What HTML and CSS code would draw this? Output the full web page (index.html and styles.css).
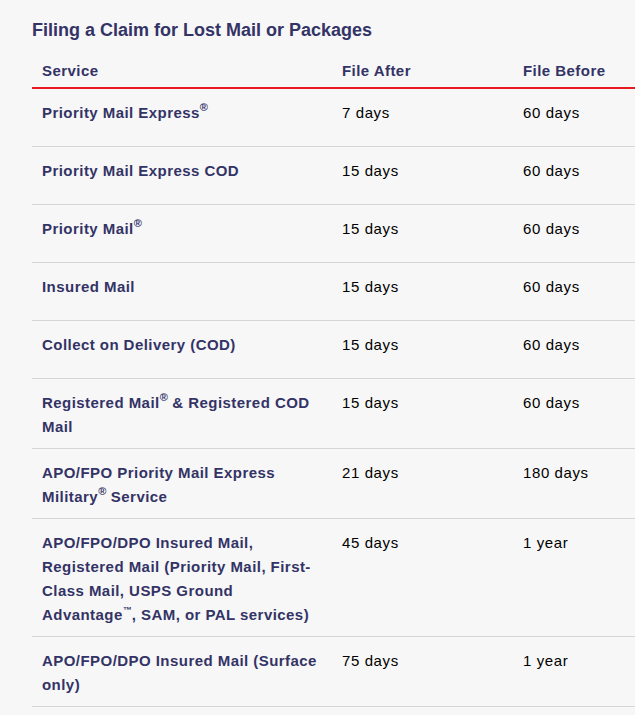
FILE: index.html
```html
<!DOCTYPE html>
<html lang="en">
<head>
<meta charset="utf-8">
<title>Filing a Claim for Lost Mail or Packages</title>
<link rel="stylesheet" href="styles.css">
</head>
<body>
<main class="page">
  <h2 class="title">Filing a Claim for Lost Mail or Packages</h2>
  <table class="claims">
    <colgroup>
      <col class="c-service">
      <col class="c-after">
      <col class="c-before">
    </colgroup>
    <thead>
      <tr>
        <th>Service</th>
        <th>File After</th>
        <th>File Before</th>
      </tr>
    </thead>
    <tbody>
      <tr><td class="svc">Priority Mail Express<sup>®</sup></td><td>7 days</td><td>60 days</td></tr>
      <tr><td class="svc">Priority Mail Express COD</td><td>15 days</td><td>60 days</td></tr>
      <tr><td class="svc">Priority Mail<sup>®</sup></td><td>15 days</td><td>60 days</td></tr>
      <tr><td class="svc">Insured Mail</td><td>15 days</td><td>60 days</td></tr>
      <tr><td class="svc">Collect on Delivery (COD)</td><td>15 days</td><td>60 days</td></tr>
      <tr><td class="svc">Registered Mail<sup>®</sup> &amp; Registered COD Mail</td><td>15 days</td><td>60 days</td></tr>
      <tr><td class="svc">APO/FPO Priority Mail Express Military<sup>®</sup> Service</td><td>21 days</td><td>180 days</td></tr>
      <tr><td class="svc">APO/FPO/DPO Insured Mail, Registered Mail (Priority Mail, First-Class Mail, USPS Ground Advantage<sup class="tm">™</sup>, SAM, or PAL services)</td><td>45 days</td><td>1 year</td></tr>
      <tr><td class="svc">APO/FPO/DPO Insured Mail (Surface only)</td><td>75 days</td><td>1 year</td></tr>
    </tbody>
  </table>
</main>
</body>
</html>
```
FILE: styles.css
```css
html, body {
  margin: 0;
  padding: 0;
  background: #f7f7f7;
}
body {
  font-family: "Liberation Sans", Arial, sans-serif;
  color: #000;
}
.page {
  padding: 18px 0 0 32px;
}
.title {
  margin: 0 0 17px;
  font-size: 18px;
  line-height: 24px;
  font-weight: bold;
  color: #333366;
}
.claims {
  width: 603px;
  border-collapse: collapse;
  table-layout: fixed;
  font-size: 15px;
  line-height: 24px;
  letter-spacing: 0.6px;
}
.c-service { width: 300px; }
.c-after { width: 181px; }
.c-before { width: 122px; }
.claims th {
  text-align: left;
  font-weight: bold;
  letter-spacing: 0.45px;
  color: #333366;
  padding: 0 10px 4px;
  border-bottom: 2px solid #e71921;
  vertical-align: bottom;
}
.claims td {
  padding: 12px 10px 9px;
  vertical-align: top;
  border-bottom: 1px solid #d6d6d6;
}
.claims tbody tr {
  height: 58px;
}
.claims td.svc {
  font-weight: bold;
  letter-spacing: 0.45px;
  color: #333366;
}
.claims sup {
  font-size: 11px;
  line-height: 0;
  letter-spacing: 0;
  vertical-align: 7px;
}
.claims sup.tm {
  font-size: 9px;
}
```
